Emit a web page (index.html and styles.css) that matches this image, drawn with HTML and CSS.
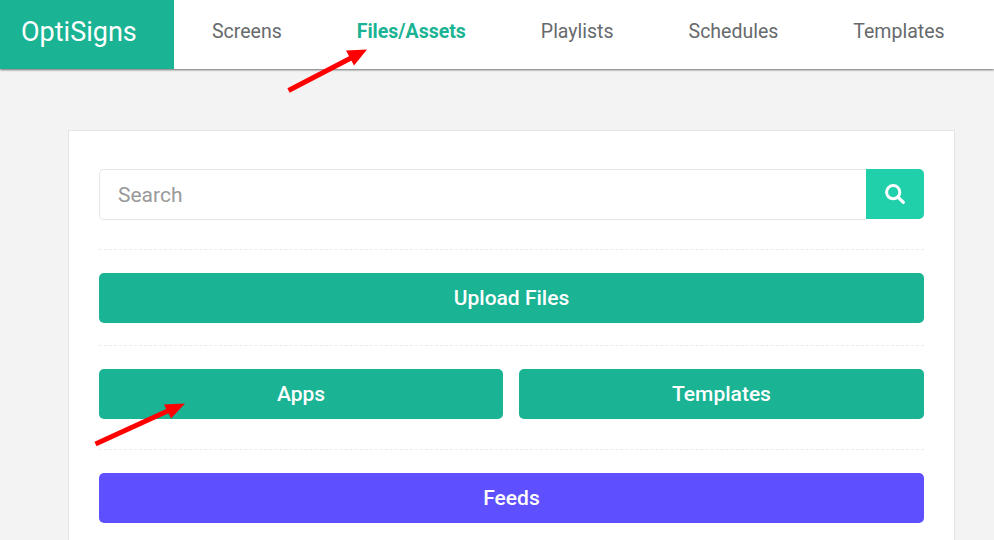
FILE: index.html
```html
<!DOCTYPE html>
<html lang="en">
<head>
<meta charset="utf-8">
<title>OptiSigns</title>
<link rel="stylesheet" href="styles.css">
</head>
<body>
<header class="topbar">
  <a class="brand">OptiSigns</a>
  <nav class="nav">
    <a class="nav-link">Screens</a>
    <a class="nav-link active">Files/Assets</a>
    <a class="nav-link">Playlists</a>
    <a class="nav-link">Schedules</a>
    <a class="nav-link">Templates</a>
  </nav>
</header>
<main class="page">
  <section class="card">
    <div class="search">
      <input class="search-input" type="text" placeholder="Search">
      <button class="search-btn" aria-label="Search">
        <svg width="20" height="20" viewBox="0 0 20 20" fill="none" stroke="#fff">
          <circle cx="8.200" cy="8.200" r="6.600" stroke-width="3"/>
          <path d="M13 13l5.300 5.300" stroke-width="3.200" stroke-linecap="round"/>
        </svg>
      </button>
    </div>
    <hr class="rule rule-first">
    <button class="btn btn-teal">Upload Files</button>
    <hr class="rule">
    <div class="btn-row">
      <button class="btn btn-teal">Apps</button>
      <button class="btn btn-teal">Templates</button>
    </div>
    <hr class="rule rule-wide">
    <button class="btn btn-purple">Feeds</button>
  </section>
</main>
<svg class="arrows" width="994" height="540" viewBox="0 0 994 540">
  <path d="M288.500 90.500L352 57.500" stroke="#f00" stroke-width="5" fill="none"/>
  <path d="M367 49.500L346 50.500L354 65.500Z" fill="#f00"/>
  <path d="M95.500 444L172 409" stroke="#f00" stroke-width="5" fill="none"/>
  <path d="M185 403.500L164 404.500L171 418.500Z" fill="#f00"/>
</svg>
</body>
</html>
```
FILE: styles.css
```css
* { box-sizing: border-box; }
html, body { height: 100%; }
body {
  margin: 0;
  height: 540px;
  overflow: hidden;
  background: #f3f3f3;
  font-family: Roboto, "Liberation Sans", sans-serif;
  position: relative;
}
.topbar {
  display: flex;
  height: 69px;
  background: #fff;
  box-shadow: 0 1px 2px rgba(0, 0, 0, 0.55);
}
.brand {
  width: 174px;
  background: #1ab394;
  color: #fff;
  font-size: 27px;
  line-height: 64px;
  padding-left: 21px;
}
.nav {
  display: flex;
  gap: 75px;
  padding-left: 38px;
}
.nav-link {
  color: #676a6c;
  font-size: 19.5px;
  line-height: 63px;
}
.nav-link.active {
  color: #1ab394;
  font-weight: 700;
}
.page {
  padding: 61px 40px 0 68px;
}
.card {
  background: #fff;
  border: 1px solid #e3e3e3;
  width: 887px;
  height: 420px;
  padding: 38px 30px 0;
}
.search {
  display: flex;
  height: 51px;
}
.search-input {
  flex: 1;
  min-width: 0;
  height: 51px;
  border: 1px solid #e5e6e7;
  border-right: 0;
  border-radius: 5px 0 0 5px;
  padding: 0 18px;
  font-family: inherit;
  font-size: 21px;
  color: #676a6c;
  outline: none;
}
.search-input::placeholder {
  color: #999;
  opacity: 1;
}
.search-btn {
  width: 58px;
  height: 50px;
  border: 0;
  padding: 0;
  border-radius: 0 5px 5px 0;
  background: #1fd0ab;
  display: flex;
  align-items: center;
  justify-content: center;
}
.rule {
  border: 0;
  border-top: 1px dashed #ebebeb;
  margin: 22px 0 23px;
  height: 0;
}
.rule-first { margin-top: 29px; }
.rule-wide { margin-top: 30px; }
.btn {
  display: block;
  width: 100%;
  height: 50px;
  border: 0;
  border-radius: 5px;
  color: #fff;
  font-family: inherit;
  font-size: 21px;
  font-weight: 500;
}
.btn-teal { background: #1ab394; }
.btn-purple { background: #5f50ff; }
.btn-row {
  display: grid;
  grid-template-columns: 404px 405px;
  gap: 16px;
}
.arrows {
  position: absolute;
  left: 0;
  top: 0;
  pointer-events: none;
}
```
